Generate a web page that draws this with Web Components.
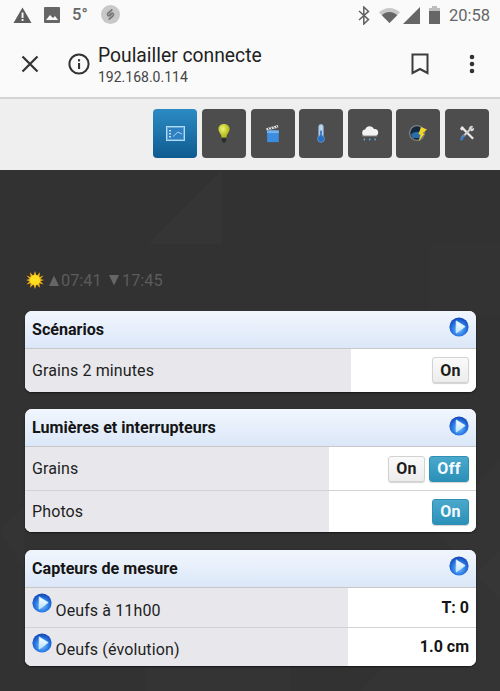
<!DOCTYPE html>
<html lang="fr"><head><meta charset="utf-8"><title>Poulailler connecte</title>
<style>
html,body{margin:0;height:691px;overflow:hidden;background:#323232;font-family:Roboto,"Liberation Sans",sans-serif}
</style></head><body>
<app-page>
<status-bar slot="top"></status-bar>
<browser-bar slot="top" title-text="Poulailler connecte" url="192.168.0.114"></browser-bar>
<nav-bar slot="top"></nav-bar>
<sun-info></sun-info>
<dash-card heading="Scénarios">
  <dash-row label="Grains 2 minutes" lw="326.5"><toggle-btn>On</toggle-btn></dash-row>
</dash-card>
<dash-card heading="Lumières et interrupteurs">
  <dash-row label="Grains" lw="304.5"><toggle-btn>On</toggle-btn><toggle-btn active wide>Off</toggle-btn></dash-row>
  <dash-row label="Photos" lw="304.5"><toggle-btn active>On</toggle-btn></dash-row>
</dash-card>
<dash-card heading="Capteurs de mesure">
  <dash-row label="Oeufs à 11h00" lw="323" icon short value="T: 0"></dash-row>
  <dash-row label="Oeufs (évolution)" lw="323" icon short value="1.0 cm"></dash-row>
</dash-card>
</app-page>
<script>
const def=(n,html,extra={})=>{customElements.define(n,class extends HTMLElement{
  connectedCallback(){ if(this.shadowRoot) return; this.attachShadow({mode:'open'}).innerHTML=typeof html==='function'?html(this):html; extra.init&&extra.init(this);}
});};
const play=s=>`<svg width="${s}" height="${s}" viewBox="0 0 20 20" style="display:block;flex:none"><defs><radialGradient id="pg" cx="50%" cy="62%" r="62%"><stop offset="0" stop-color="#7fc4fb"/><stop offset=".55" stop-color="#2a7be6"/><stop offset="1" stop-color="#1143b4"/></radialGradient><linearGradient id="pw" x1="0" y1="0" x2="0" y2="1"><stop offset="0" stop-color="#fff"/><stop offset="1" stop-color="#b9e1fb"/></linearGradient></defs><circle cx="10" cy="10" r="9.6" fill="url(#pg)"/><path d="M7.2 3.9 16.2 9.6 7.2 16.1Z" fill="url(#pw)" stroke="#d8f0ff" stroke-width=".8" stroke-linejoin="round"/></svg>`;

def('app-page',`<style>
:host{display:block;height:691px;position:relative;overflow:hidden}
.main{position:relative;background:#323232;height:521px;box-sizing:border-box;padding:98px 24px 0 24.5px;overflow:hidden}
.bg{position:absolute;inset:0;width:100%;height:100%}
.stack{position:relative;display:flex;flex-direction:column;gap:17.5px}
</style><slot name="top"></slot><div class="main">
<svg class="bg" viewBox="0 0 500 521" aria-hidden="true"><g fill="#fff">
<path d="M222 0 148 74H222Z" fill-opacity=".014"/>
<path d="M72 0 0 72 72 146 145 72Z" fill-opacity=".005"/>
<path d="M360 0 430 72 360 145Z" fill-opacity=".005"/>
<path d="M430 72H500V145H430Z" fill-opacity=".006"/>
<path d="M434 360 500 290V430Z" fill-opacity=".012"/>
<path d="M145 465 220 395 290 465V521H145Z" fill-opacity=".01"/>
<path d="M360 521 430 450 500 380V521Z" fill-opacity=".012"/>
<path d="M0 360 24 336V400Z" fill-opacity=".01"/>
</g></svg>
<div class="stack"><slot></slot></div></div>`);

def('status-bar',`<style>
:host{display:flex;height:30px;background:#fafafa;align-items:center;box-sizing:border-box;padding:0 10px 0 13px;color:#626262;font:500 16px Roboto,sans-serif}
svg{display:block;flex:none}
.sp{flex:1}
</style>
<svg width="19" height="16" viewBox="0 0 19 16" style="margin-right:12px;margin-top:-1px"><path d="M9.5 0.5 18.5 16H.5Z" fill="#5e5e5e"/><rect x="8.6" y="5.5" width="1.9" height="5.5" fill="#fafafa"/><rect x="8.6" y="12" width="1.9" height="1.9" fill="#fafafa"/></svg>
<svg width="16" height="16" viewBox="0 0 16 16" style="margin-right:12px;margin-top:-1px"><rect width="16" height="16" rx="1" fill="#666"/><path d="M2 13 6 8l3 3 2-2 3 4Z" fill="#fafafa"/></svg>
<span style="width:24px;margin-right:5px;font-size:16.5px;margin-top:-1px;color:#666">5°</span>
<svg width="19" height="19" viewBox="0 0 19 19" style="margin-top:-1px"><circle cx="9.5" cy="9.5" r="9.5" fill="#c8c8c8"/><path d="M10.8 5 7 8.2c-1.4 1.4.2 3.3 1.9 2.3l1.2-1M8.2 14 12 10.8c1.4-1.4-.2-3.3-1.9-2.3L8.9 9.5" fill="none" stroke="#777" stroke-width="1.7" stroke-linecap="round"/></svg>
<span class="sp"></span>
<svg width="12" height="19" viewBox="0 0 12 19" style="margin-right:9px"><path d="M1 5 10.5 13.6 5.8 18V1L10.5 5.4 1 14" fill="none" stroke="#616161" stroke-width="1.5"/></svg>
<svg width="21" height="15" viewBox="0 0 21 15" style="margin-right:3px"><path d="M0 4.5C6-1.5 15-1.5 21 4.5L10.5 15Z" fill="#c9c9c9"/><path d="M2.8 7.2C7.5 3 13.5 3 18.2 7.2L10.5 15Z" fill="#666"/></svg>
<svg width="17" height="17" viewBox="0 0 17 17" style="margin-right:9px;margin-top:1px"><path d="M17 0V17H0Z" fill="#666"/></svg>
<svg width="11" height="18" viewBox="0 0 11 18" style="margin-right:9px"><path d="M3 2V0H8V2H11V18H0V2Z" fill="#bdbdbd"/><rect y="5" width="11" height="13" fill="#666"/></svg>
<span style="font:400 16.5px Roboto,sans-serif;color:#666">20:58</span>`);

def('browser-bar',t=>`<style>
:host{display:flex;height:69px;box-sizing:border-box;background:#fafafa;border-bottom:2px solid #d4d4d4;align-items:center;color:#333}
svg{display:block;flex:none}
.t{flex:1;display:flex;flex-direction:column;margin-top:2px;min-width:0}
.a{font:400 19.3px/24px Roboto,sans-serif;color:#222}
.b{font:400 14px/18px Roboto,sans-serif;color:#444}
</style>
<svg width="20" height="20" viewBox="0 0 20 20" style="margin:0 28px 0 20px"><path d="M2.5 2.5 17.5 17.5M17.5 2.5 2.5 17.5" stroke="#333" stroke-width="2.2"/></svg>
<svg width="22" height="22" viewBox="0 0 22 22" style="margin-right:8px"><circle cx="11" cy="11" r="9.6" fill="none" stroke="#333" stroke-width="2"/><rect x="10" y="10" width="2.1" height="6" fill="#333"/><rect x="10" y="6.2" width="2.1" height="2.2" fill="#333"/></svg>
<div class="t"><span class="a">${t.getAttribute('title-text')}</span><span class="b">${t.getAttribute('url')}</span></div>
<svg width="18" height="22" viewBox="0 0 18 22" style="margin-right:40px"><path d="M1.5 1.5H16.5V20L9 16 1.5 20Z" fill="none" stroke="#3c3c3c" stroke-width="2"/></svg>
<svg width="6" height="20" viewBox="0 0 6 20" style="margin-right:25px"><circle cx="3" cy="3" r="2.3" fill="#333"/><circle cx="3" cy="10" r="2.3" fill="#333"/><circle cx="3" cy="17" r="2.3" fill="#333"/></svg>`);

const icons=[
`<svg width="19" height="15" viewBox="0 0 19 15"><rect x=".5" y=".5" width="18" height="14" fill="#5fa8dc" stroke="#b5dbf3"/><rect x="2" y="2" width="15" height="11" fill="#2f80c0"/><rect x="3" y="4" width="2" height="1.4" fill="#c8e6f8"/><rect x="3" y="7" width="2" height="1.4" fill="#c8e6f8"/><rect x="3" y="10" width="2" height="1.4" fill="#c8e6f8"/><path d="M7 10.500 12 6l4 2" stroke="#a8d6f2" fill="none"/></svg>`,
`<svg width="12" height="19" viewBox="0 0 14 22"><defs><radialGradient id="bu" cx=".4" cy=".35"><stop offset="0" stop-color="#eef277"/><stop offset="1" stop-color="#b8bf1e"/></radialGradient></defs><path d="M7 0C3 0 .5 2.6.5 6c0 3 3.2 5 3.9 10h5.2C10.300 11 13.500 9 13.500 6 13.500 2.600 11 0 7 0Z" fill="url(#bu)"/><rect x="4.500" y="16" width="5" height="4" fill="#2c2c2c"/><rect x="5.500" y="20" width="3" height="1.500" fill="#222"/></svg>`,
`<svg width="13" height="18" viewBox="0 0 14 20"><path d="M0 3.500 13 0 13.500 3 .5 6Z" fill="#ddd"/><path d="M2 3 3.500 5.500M5 2.300 6.500 4.800M8 1.500 9.500 4M11 .8 12.500 3.300" stroke="#444"/><rect x="1" y="6" width="13" height="13" fill="#3c8de0"/><rect x="1" y="6" width="13" height="3" fill="#74b4ee"/></svg>`,
`<svg width="8" height="19" viewBox="0 0 9 23"><rect x="1.800" y=".5" width="5.400" height="16" rx="2.500" fill="#bcd5ec" stroke="#8cb2d4"/><circle cx="4.500" cy="18" r="4.300" fill="#2a6fc2" stroke="#8cb2d4" stroke-width=".6"/><rect x="3.500" y="8" width="2" height="9" fill="#2a6fc2"/></svg>`,
`<svg width="18" height="16" viewBox="0 0 20 17"><path d="M4 10.500a3.500 3.500 0 0 1 .6-6.900A5.300 5.300 0 0 1 14.500 3a3.800 3.800 0 0 1 1.500 7.500Z" fill="#f2f2f2"/><path d="M1.500 10.500H18" stroke="#bbb"/><path d="M4 13.500 3.500 15.500M10 13.500 9.500 15.500M16 13.500 15.500 15.500" stroke="#58b0e6" stroke-width="1.500"/></svg>`,
`<svg width="18" height="17" viewBox="0 0 18 17"><circle cx="8" cy="8" r="7.400" fill="#13283c" stroke="#7e7e7e" stroke-width="1.300"/><path d="M2 9.500C5 6 11 6 14 9L13 13 3.500 13Z" fill="#2a6da8"/><path d="M12 2 18 4.500 14 8 15.500 9 9.500 16.500 11.500 10 9.500 9Z" fill="#f0d52c"/></svg>`,
`<svg width="16" height="17" viewBox="0 0 17 17"><path d="M2.500 1.500 15 14" stroke="#e8e8e8" stroke-width="2.400"/><path d="M1 3.500 3.500 1l2 2-2.500 2.500Z" fill="#e8e8e8"/><path d="M14.500 1.500C12.500 1 11 2.600 11.500 4.500L3 13" stroke="#cfcfcf" stroke-width="2.200" fill="none"/><path d="M2.600 12.500 1 15l1.200 1.200L5 14.500" fill="#3f7ec8"/><path d="M3 13.500 6 10.500" stroke="#3f7ec8" stroke-width="2.400"/><path d="M12 1.500 14 3.500 16 2.500C16.500 5 14.500 6.500 12.500 6Z" fill="#dedede"/></svg>`];
def('nav-bar',`<style>
:host{display:flex;height:71px;box-sizing:border-box;background:#efefef;padding:10px 11px 0 0;justify-content:flex-end;gap:4.600px}
</style>`+icons.map((s,i)=>`<nav-btn ${i==0?'active':''}>${s}</nav-btn>`).join(''));
def('nav-btn',`<style>
:host{display:flex;width:44px;height:49px;align-items:center;justify-content:center;border-radius:4px;background:#4d4d4d;box-sizing:border-box}
:host([active]){background:linear-gradient(#2c8bc4,#0f5b90);}
::slotted(svg){display:block}
</style><slot></slot>`);

def('sun-info',`<style>
:host{display:flex;align-items:center;height:24px;margin-bottom:1px;color:#5c5c5c;font:400 16.300px Roboto,sans-serif}
svg{display:block;flex:none}
</style>
<svg width="18" height="18" viewBox="0 0 20 20" style="margin:0 4.500px 0 1.500px"><path d="M10 0 11.800 5.600 15.500 1.500 14.800 7 19.500 5 16 9 20 10 16 11.500 19.500 15 14.800 13.500 15.500 18.500 11.800 15 10 20 8.200 15 4.500 18.500 5.200 13.500.5 15 4 11.500 0 10 4 9 .5 5 5.200 7 4.500 1.500 8.200 5.600Z" fill="#f5b416"/><circle cx="10" cy="10" r="5.600" fill="#ffdf20"/></svg>
<svg width="10" height="11" viewBox="0 0 10 11" style="margin-right:2.500px"><path d="M5 .5 10 11H0Z" fill="#666"/></svg><span style="margin-right:7.500px">07:41</span>
<svg width="10" height="11" viewBox="0 0 10 11" style="margin-right:3px"><path d="M5 10.500 10 0H0Z" fill="#666"/></svg><span>17:45</span>`);

def('dash-card',t=>`<style>
:host{display:block;border-radius:7px;overflow:hidden;box-shadow:0 1px 2px rgba(0,0,0,.55);background:#fff;color:#1c1c1c;font:400 16px Roboto,sans-serif}
.h{height:37px;display:flex;align-items:center;justify-content:space-between;padding:0 7px 0 7.500px;background:linear-gradient(#f1f6fd,#dbe7f8);font-weight:700;font-size:16.100px;color:#151515;border-bottom:1px solid #c8c8c8}
</style><div class="h"><span>${t.getAttribute('heading')}</span><span style="margin-top:-4px">${play(20)}</span></div><slot></slot>`);

def('dash-row',t=>`<style>
:host{display:flex;height:41px;background:#fff;border-top:1px solid #d2d2d2;font-size:16px}
:host(:first-child){border-top:0;height:43px}
:host([short]){height:38px}
:host([short]:first-child){height:39px}
.l{width:${t.getAttribute('lw')}px;flex:none;background:#e8e8ec;display:flex;align-items:center;padding-left:7.500px;box-sizing:border-box;color:#1e1e1e;letter-spacing:.12px}
.r{flex:1;display:flex;align-items:center;justify-content:flex-end;gap:4px;padding-right:7px;font-weight:700;font-size:16px;color:#151515}
.i{margin:-8px 3.500px 0 0}
.tx{${t.hasAttribute('icon')?'margin-top:6px':''}}
</style><div class="l">${t.hasAttribute('icon')?`<span class="i">${play(20)}</span>`:''}<span class="tx">${t.getAttribute('label')}</span></div><div class="r">${t.getAttribute('value')||''}<slot></slot></div>`);

def('toggle-btn',`<style>
:host{display:flex;align-items:center;justify-content:center;height:26px;min-width:37px;box-sizing:border-box;border-radius:3px;padding:0 6.500px;font:700 16px Roboto,sans-serif;letter-spacing:.3px;color:#1c1c1c;background:linear-gradient(#fafafa,#ececec);border:1px solid #d2d2d2;box-shadow:0 1px 1px rgba(0,0,0,.18)}
:host([active]){color:#f4fbff;background:linear-gradient(#4aa9cc,#2b90b8);border-color:#2f8fb5}
:host([wide]){min-width:40px}
</style><slot></slot>`);
</script>
</body></html>
